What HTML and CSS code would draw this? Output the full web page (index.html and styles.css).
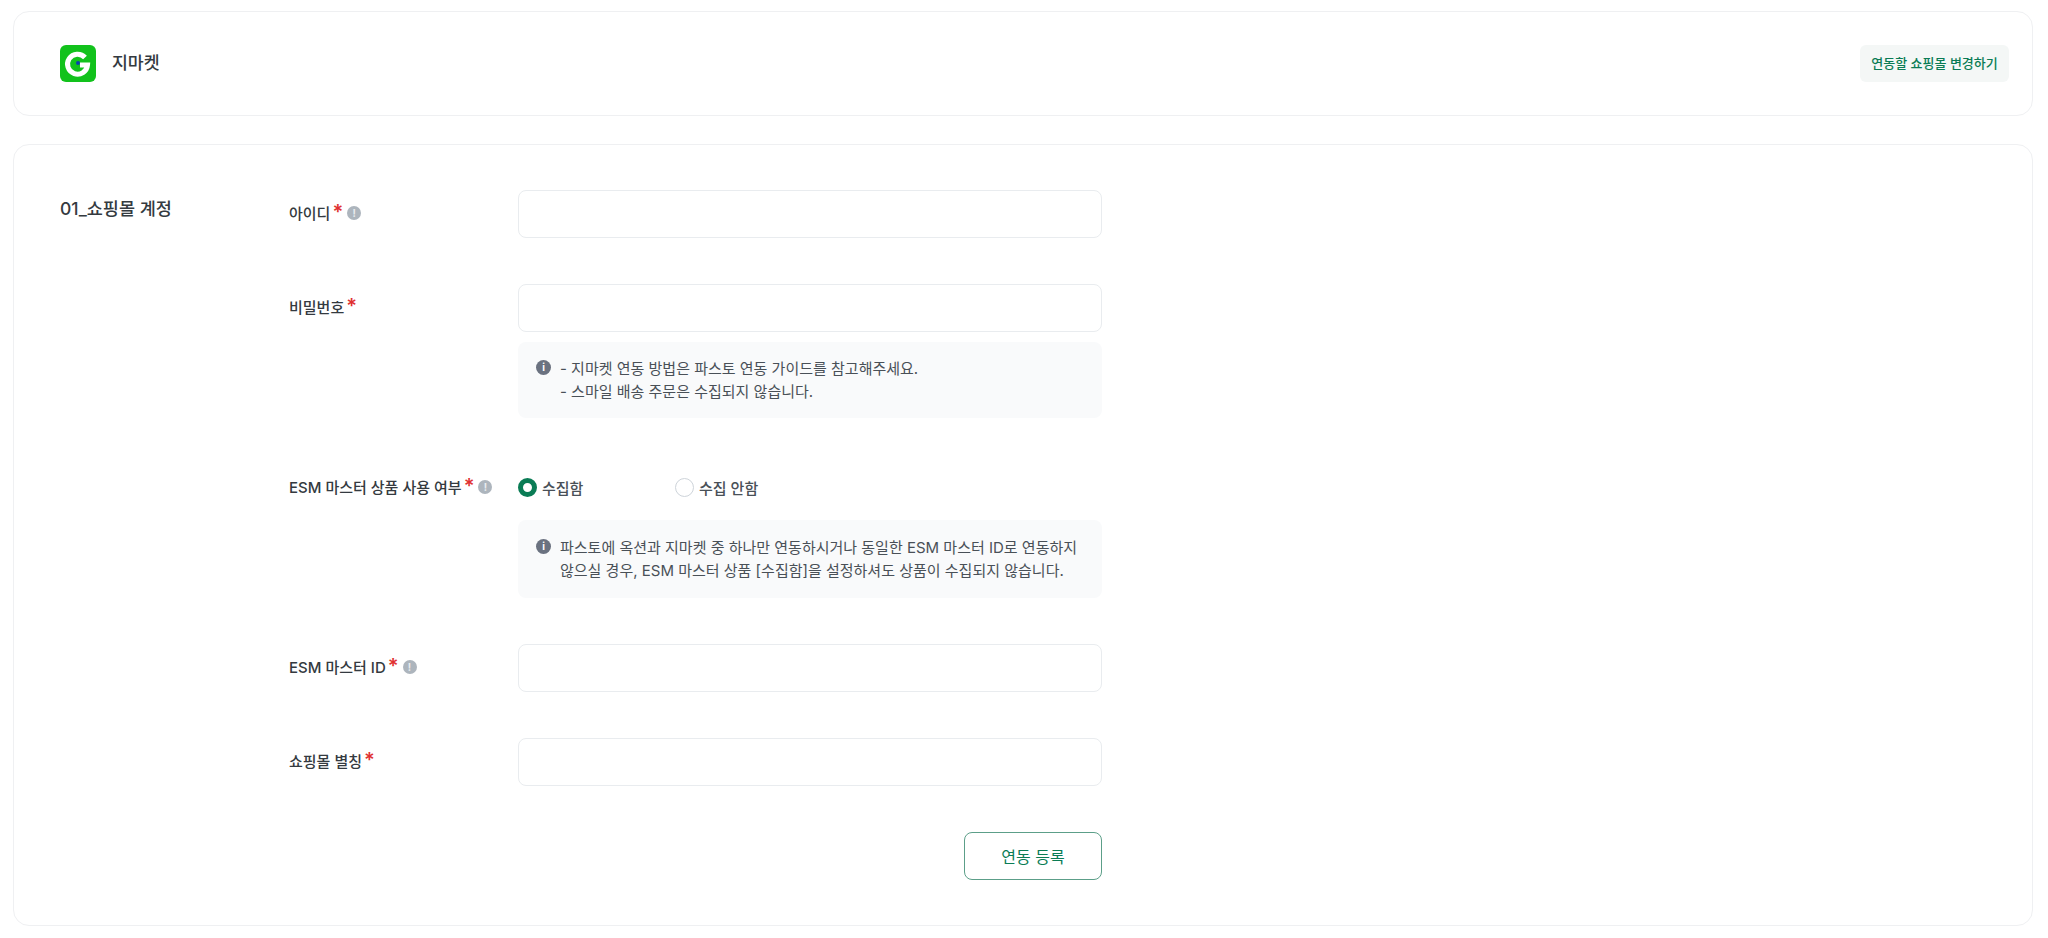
FILE: index.html
```html
<!DOCTYPE html>
<html lang="ko">
<head>
  <meta charset="UTF-8" />
  <meta name="viewport" content="width=device-width, initial-scale=1.0"/>
  <title>지마켓 연동</title>
  <link rel="stylesheet" href="styles.css">
</head>
<body>
  <div class="page">
    <div class="card mall-card">
      <div class="mall-name">
        <svg class="mall-logo" width="36" height="37" viewBox="0 0 36 37">
          <rect width="36" height="37" rx="6" fill="#12c21c"/>
          <path d="M25 12.5A10 10 0 1 0 27.5 20H20" fill="none" stroke="#fff" stroke-width="5"/>
          <circle cx="18" cy="18" r="2" fill="#0b3fb0"/>
        </svg>
        <span>지마켓</span>
      </div>
      <button class="change-btn">연동할 쇼핑몰 변경하기</button>
    </div>

    <div class="card form-card">
      <h2 class="section-title">01_쇼핑몰 계정</h2>
      <div class="form">
        <div class="row">
          <label class="label">아이디<span class="req">*</span><i class="hint">!</i></label>
          <div class="field"><input class="input" type="text"></div>
        </div>

        <div class="row">
          <label class="label">비밀번호<span class="req">*</span></label>
          <div class="field">
            <input class="input" type="password">
            <div class="note">
              <i class="note-icon">i</i>
              <p>- 지마켓 연동 방법은 파스토 연동 가이드를 참고해주세요.<br>- 스마일 배송 주문은 수집되지 않습니다.</p>
            </div>
          </div>
        </div>

        <div class="row">
          <label class="label">ESM 마스터 상품 사용 여부<span class="req">*</span><i class="hint">!</i></label>
          <div class="field">
            <div class="radios">
              <label class="radio"><span class="dot on"></span>수집함</label>
              <label class="radio"><span class="dot"></span>수집 안함</label>
            </div>
            <div class="note note-tall">
              <i class="note-icon">i</i>
              <p>파스토에 옥션과 지마켓 중 하나만 연동하시거나 동일한 ESM 마스터 ID로 연동하지 않으실 경우, ESM 마스터 상품 [수집함]을 설정하셔도 상품이 수집되지 않습니다.</p>
            </div>
          </div>
        </div>

        <div class="row">
          <label class="label">ESM 마스터 ID<span class="req">*</span><i class="hint">!</i></label>
          <div class="field"><input class="input" type="text"></div>
        </div>

        <div class="row">
          <label class="label">쇼핑몰 별칭<span class="req">*</span></label>
          <div class="field"><input class="input" type="text"></div>
        </div>

        <div class="actions">
          <button class="submit-btn">연동 등록</button>
        </div>
      </div>
    </div>
  </div>
</body>
</html>
```

FILE: styles.css
```css
* {
  box-sizing: border-box;
}
body {
  margin: 0;
  background-color: #fff;
  color: #343a40;
  font-family: Inter, "Noto Sans CJK KR", sans-serif;
}
.page {
  display: flex;
  flex-direction: column;
  gap: 28px;
  padding: 11px 15px 12px 13px;
}
.card {
  background: #fff;
  border: 1px solid #eff0f2;
  border-radius: 16px;
}
.mall-card {
  display: flex;
  justify-content: space-between;
  align-items: center;
  height: 105px;
  padding: 0 23px 0 46px;
}
.mall-name {
  display: flex;
  align-items: center;
  gap: 16px;
  font-size: 17.25px;
  font-weight: 500;
}
.mall-name span {
  margin-top: -4px;
}
.mall-logo {
  display: block;
}
.change-btn {
  width: 149px;
  height: 37px;
  padding: 0 0 2px;
  border: none;
  border-radius: 6px;
  background-color: #f4f7f6;
  color: #0a7c55;
  font-family: inherit;
  font-size: 13px;
  font-weight: 500;
}
.form-card {
  display: flex;
  height: 782px;
  padding: 45px 0 0 46px;
}
.section-title {
  width: 229px;
  margin: 7px 0 0;
  font-size: 17.5px;
  font-weight: 500;
  line-height: 24px;
}
.form {
  width: 813px;
}
.row {
  display: flex;
  margin-bottom: 46px;
}
.label {
  display: flex;
  align-items: center;
  width: 229px;
  height: 44px;
  font-size: 15px;
  font-weight: 500;
}
.req {
  margin-left: 2px;
  color: #e03131;
  font-size: 20px;
  font-weight: 600;
  line-height: 1;
}
.hint {
  display: inline-flex;
  justify-content: center;
  align-items: center;
  width: 14px;
  height: 14px;
  margin: 2px 0 0 4px;
  border-radius: 50%;
  background-color: #adb5bd;
  color: #e9ecef;
  font-size: 10px;
  font-style: normal;
  font-weight: 700;
}
.field {
  width: 584px;
}
.input {
  display: block;
  width: 100%;
  height: 48px;
  padding: 0 16px;
  border: 1px solid #e9ecef;
  border-radius: 8px;
  background: #fff;
}
.note {
  display: flex;
  gap: 9px;
  margin-top: 10px;
  padding: 15px 18px;
  border-radius: 8px;
  background-color: #f9fafb;
  color: #495057;
  font-size: 15px;
  line-height: 23px;
}
.note-tall {
  padding: 16px 18px;
}
.note p {
  margin: 0;
}
.note-icon {
  flex: none;
  display: flex;
  justify-content: center;
  align-items: center;
  width: 15px;
  height: 15px;
  margin-top: 3px;
  border-radius: 50%;
  background-color: #6b7280;
  color: #fff;
  font-size: 10px;
  font-style: normal;
  font-weight: 700;
}
.radios {
  display: flex;
  align-items: center;
  height: 46px;
}
.radio {
  display: flex;
  align-items: center;
  gap: 5px;
  width: 157px;
  color: #495057;
  font-size: 15px;
  font-weight: 500;
}
.dot {
  width: 19px;
  height: 19px;
  border: 1.5px solid #ced4da;
  border-radius: 50%;
  background: #fff;
}
.dot.on {
  border: 5px solid #0a7c55;
}
.actions {
  display: flex;
  justify-content: flex-end;
  margin-top: 46px;
  width: 813px;
}
.submit-btn {
  width: 138px;
  height: 48px;
  padding: 0;
  border: 1px solid #5c9f89;
  border-radius: 8px;
  background: #fff;
  color: #0a7c55;
  font-family: inherit;
  font-size: 16px;
  font-weight: 400;
}
```
